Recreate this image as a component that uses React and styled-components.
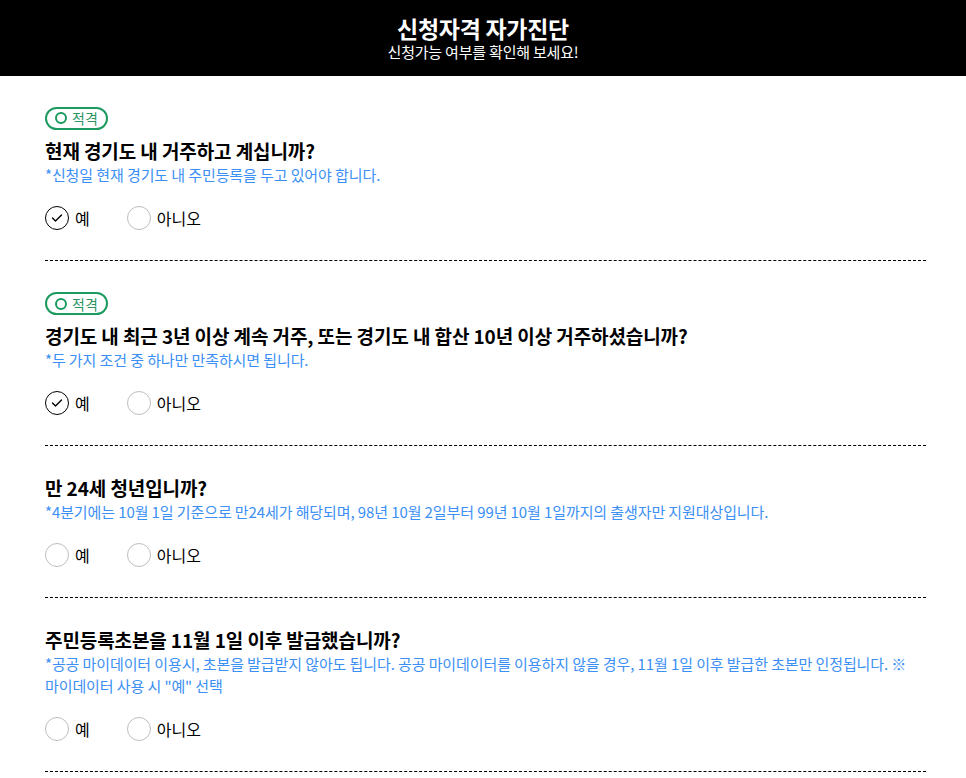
import React from "react";
import styled, { createGlobalStyle } from "styled-components";

const Global = createGlobalStyle`
  html, body { margin: 0; padding: 0; background: #fff; }
  body { font-family: "Noto Sans CJK KR", "Noto Sans", sans-serif; color: #000; }
`;

const Header = styled.header`
  height: 76px;
  background: #000;
  color: #fff;
  display: flex;
  flex-direction: column;
  align-items: center;
  justify-content: flex-start;
  padding-top: 15px;
  box-sizing: border-box;
`;

const Title = styled.h1`
  margin: 0;
  font-size: 23px;
  font-weight: 700;
  line-height: 26px;
  letter-spacing: -0.3px;
`;

const Subtitle = styled.p`
  margin: 2px 0 0;
  font-size: 15px;
  line-height: 18px;
  letter-spacing: -0.2px;
`;

const Main = styled.main`
  padding: 0 40px 0 45px;
`;

const Section = styled.section`
  padding: ${(p) => (p.$first ? "29px" : "30px")} 0 30px;
  border-bottom: 1px dashed #000;
`;

const Badge = styled.span`
  display: inline-flex;
  align-items: center;
  gap: 5px;
  height: 23px;
  box-sizing: border-box;
  padding: 0 8px 0 8px;
  border: 2px solid #1c9a60;
  border-radius: 12px;
  font-size: 14px;
  color: #2c9463;
  margin-bottom: 9px;
`;

const BadgeRing = styled.span`
  width: 12px;
  height: 12px;
  box-sizing: border-box;
  border: 2px solid #1c9a60;
  border-radius: 50%;
`;

const Question = styled.h2`
  margin: 0;
  font-size: 19px;
  line-height: 24px;
  font-weight: 700;
  letter-spacing: -0.1px;
`;

const Hint = styled.p`
  margin: 1px 0 0;
  font-size: 15px;
  line-height: 22px;
  color: #3b8ff5;
  letter-spacing: -0.1px;
  word-break: keep-all;
`;

const Options = styled.div`
  display: flex;
  gap: 37px;
  margin-top: 20px;
`;

const Option = styled.label`
  display: flex;
  align-items: center;
  gap: 6px;
  font-size: 16px;
  line-height: 24px;
`;

const Circle = styled.span`
  width: 24px;
  height: 24px;
  box-sizing: border-box;
  border-radius: 50%;
  border: 1px solid ${(p) => (p.$checked ? "#000" : "#bdbdbd")};
  display: flex;
  align-items: center;
  justify-content: center;
`;

function Radio({ checked, label }) {
  return (
    <Option>
      <Circle $checked={checked}>
        {checked && (
          <svg width="12" height="10" viewBox="0 0 12 10">
            <path d="M1.5 5 L4.5 8 L10.5 2" fill="none" stroke="#000" strokeWidth="1.4" strokeLinecap="round" strokeLinejoin="round" />
          </svg>
        )}
      </Circle>
      {label}
    </Option>
  );
}

const questions = [
  {
    badge: true,
    q: "현재 경기도 내 거주하고 계십니까?",
    hint: "*신청일 현재 경기도 내 주민등록을 두고 있어야 합니다.",
    yes: true,
  },
  {
    badge: true,
    q: "경기도 내 최근 3년 이상 계속 거주, 또는 경기도 내 합산 10년 이상 거주하셨습니까?",
    hint: "*두 가지 조건 중 하나만 만족하시면 됩니다.",
    yes: true,
  },
  {
    badge: false,
    q: "만 24세 청년입니까?",
    hint: "*4분기에는 10월 1일 기준으로 만24세가 해당되며, 98년 10월 2일부터 99년 10월 1일까지의 출생자만 지원대상입니다.",
    yes: false,
  },
  {
    badge: false,
    q: "주민등록초본을 11월 1일 이후 발급했습니까?",
    hint: "*공공 마이데이터 이용시, 초본을 발급받지 않아도 됩니다. 공공 마이데이터를 이용하지 않을 경우, 11월 1일 이후 발급한 초본만 인정됩니다. ※ 마이데이터 사용 시 \"예\" 선택",
    yes: false,
  },
];

export default function App() {
  return (
    <>
      <Global />
      <Header>
        <Title>신청자격 자가진단</Title>
        <Subtitle>신청가능 여부를 확인해 보세요!</Subtitle>
      </Header>
      <Main>
        {questions.map((item, i) => (
          <Section key={i} $first={i === 0}>
            {item.badge && (
              <Badge>
                <BadgeRing />
                적격
              </Badge>
            )}
            <Question>{item.q}</Question>
            <Hint>{item.hint}</Hint>
            <Options>
              <Radio checked={item.yes} label="예" />
              <Radio checked={false} label="아니오" />
            </Options>
          </Section>
        ))}
      </Main>
    </>
  );
}
